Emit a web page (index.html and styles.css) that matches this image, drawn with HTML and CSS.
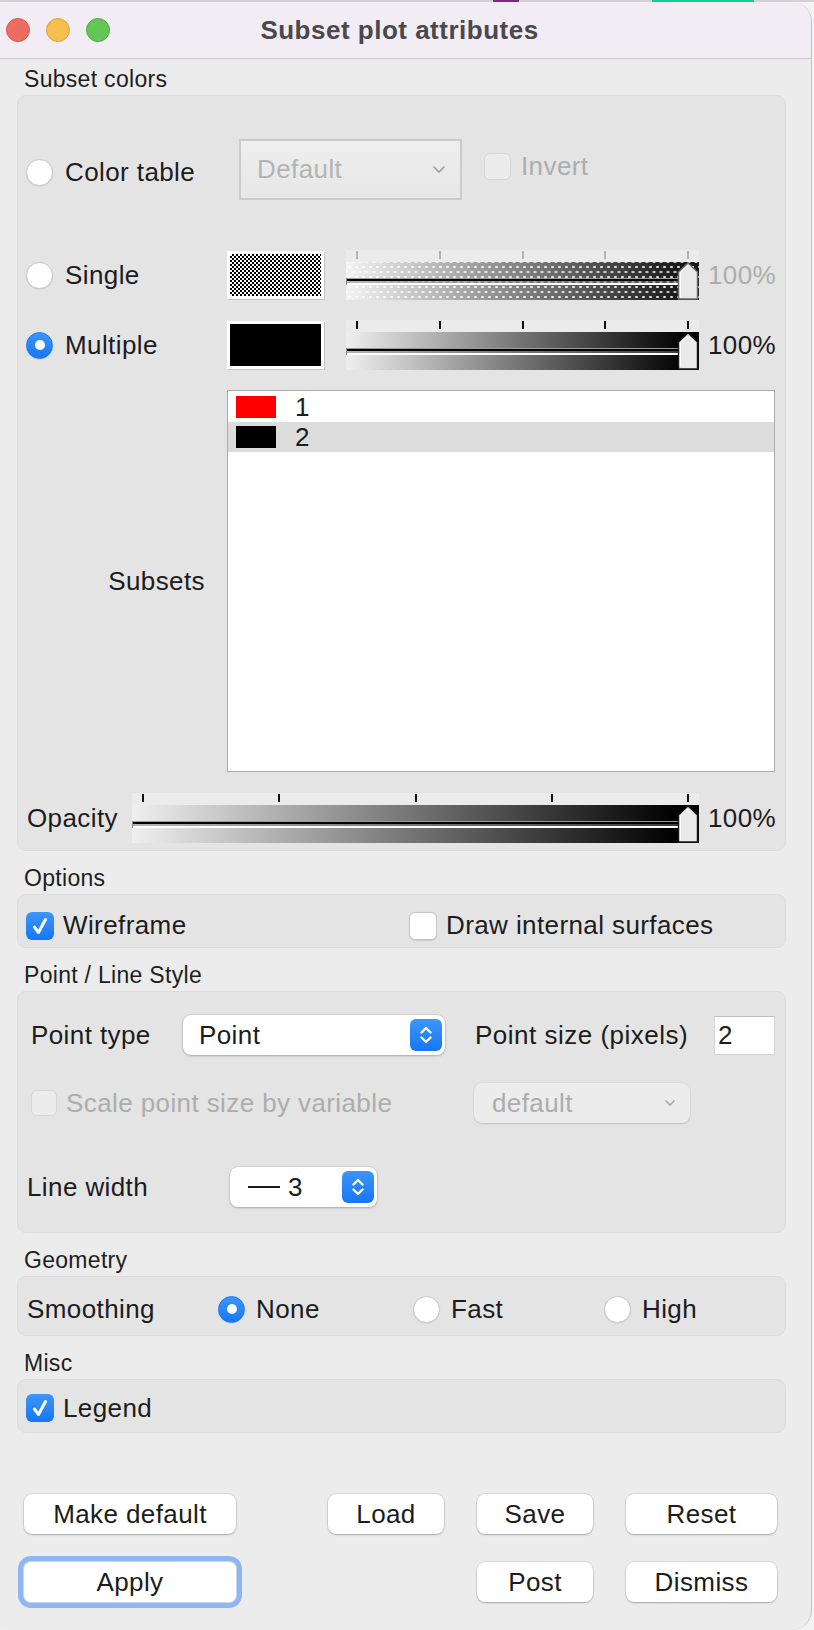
FILE: index.html
```html
<!DOCTYPE html>
<html>
<head>
<meta charset="utf-8">
<title>Subset plot attributes</title>
<link rel="stylesheet" href="styles.css">
</head>
<body>
<div class="topstrip"><span class="ts-a"></span><span class="ts-purple"></span><span class="ts-b"></span><span class="ts-green"></span></div>
<div class="window">
  <div class="titlebar">
    <div class="lights"><span class="light red"></span><span class="light yellow"></span><span class="light green"></span></div>
    <div class="title">Subset plot attributes</div>
    <div></div>
  </div>
  <div class="content">
    <section class="section">
      <div class="glabel">Subset colors</div>
      <div class="group g-colors">
        <div class="row row-ct">
          <div class="lead lead-ct"><span class="radio"></span><span>Color table</span></div>
          <div class="combo-dis"><span>Default</span><svg width="14" height="9" viewBox="0 0 14 9"><polyline points="1.5,1.5 7,7 12.5,1.5" fill="none" stroke="#a0a0a0" stroke-width="1.6"/></svg></div>
          <div class="checkitem invert"><span class="cb dis"></span><span class="distext">Invert</span></div>
        </div>
        <div class="row row-sl row-single">
          <div class="lead lead-sw"><span class="radio"></span><span>Single</span></div>
          <div class="swatch pattern"></div>
          <div class="slider dis">
            <div class="ticks"><i></i><i></i><i></i><i></i><i></i></div>
            <div class="track">
              <div class="groove"></div>
              <svg class="handle" width="22" height="38" viewBox="0 0 22 38"><path d="M1.5 37 V10 L11 1 L20.5 10 V37 Z" fill="#e9e9e9" stroke="#6a6a6a" stroke-width="1.5"/><path d="M3.3 35 V10.8 L11 3.6" fill="none" stroke="#fff" stroke-width="1"/></svg>
            </div>
          </div>
          <span class="pct distext">100%</span>
        </div>
        <div class="row row-sl row-multi">
          <div class="lead lead-sw"><span class="radio on"></span><span>Multiple</span></div>
          <div class="swatch black"></div>
          <div class="slider">
            <div class="ticks"><i></i><i></i><i></i><i></i><i></i></div>
            <div class="track">
              <div class="groove"></div>
              <svg class="handle" width="22" height="38" viewBox="0 0 22 38"><path d="M1.5 37 V10 L11 1 L20.5 10 V37 Z" fill="#e9e9e9" stroke="#1a1a1a" stroke-width="1.5"/><path d="M3.3 35 V10.8 L11 3.6" fill="none" stroke="#fff" stroke-width="1"/></svg>
            </div>
          </div>
          <span class="pct">100%</span>
        </div>
        <div class="row row-list">
          <div class="lead-list">Subsets</div>
          <div class="list">
            <div class="item"><span class="chip red-chip"></span><span>1</span></div>
            <div class="item sel"><span class="chip black-chip"></span><span>2</span></div>
          </div>
        </div>
        <div class="row row-op">
          <div class="lead-op">Opacity</div>
          <div class="slider wide">
            <div class="ticks"><i></i><i></i><i></i><i></i><i></i></div>
            <div class="track">
              <div class="groove"></div>
              <svg class="handle" width="22" height="38" viewBox="0 0 22 38"><path d="M1.5 37 V10 L11 1 L20.5 10 V37 Z" fill="#e9e9e9" stroke="#1a1a1a" stroke-width="1.5"/><path d="M3.3 35 V10.8 L11 3.6" fill="none" stroke="#fff" stroke-width="1"/></svg>
            </div>
          </div>
          <span class="pct">100%</span>
        </div>
      </div>
    </section>

    <section class="section">
      <div class="glabel">Options</div>
      <div class="group g-options">
        <div class="checkitem"><span class="cb on"><svg width="18" height="20" viewBox="0 0 18 20"><polyline points="3.5,11 7.5,16.5 14.5,3.5" fill="none" stroke="#fff" stroke-width="3" stroke-linecap="round" stroke-linejoin="round"/></svg></span><span>Wireframe</span></div>
        <div class="checkitem"><span class="cb off"></span><span>Draw internal surfaces</span></div>
      </div>
    </section>

    <section class="section">
      <div class="glabel">Point / Line Style</div>
      <div class="group g-point">
        <div class="row prow">
          <div class="lead-pt">Point type</div>
          <div class="combo combo-pt"><span>Point</span><span class="stepper"><svg width="16" height="24" viewBox="0 0 16 24"><polyline points="3.5,9.5 8,5 12.5,9.5" fill="none" stroke="#fff" stroke-width="2.4" stroke-linecap="round" stroke-linejoin="round"/><polyline points="3.5,14.5 8,19 12.5,14.5" fill="none" stroke="#fff" stroke-width="2.4" stroke-linecap="round" stroke-linejoin="round"/></svg></span></div>
          <div class="psize">Point size (pixels)</div>
          <div class="input">2</div>
        </div>
        <div class="row prow prow2">
          <div class="checkitem lead-scale"><span class="cb dis"></span><span class="distext">Scale point size by variable</span></div>
          <div class="combo combo-dis2"><span>default</span><svg width="12" height="8" viewBox="0 0 12 8"><polyline points="1.5,1.5 6,6 10.5,1.5" fill="none" stroke="#a8a8a8" stroke-width="1.6"/></svg></div>
        </div>
        <div class="row prow prow3">
          <div class="lead-lw">Line width</div>
          <div class="combo combo-lw"><span class="lwval"><span class="lwline"></span><span>3</span></span><span class="stepper"><svg width="16" height="24" viewBox="0 0 16 24"><polyline points="3.5,9.5 8,5 12.5,9.5" fill="none" stroke="#fff" stroke-width="2.4" stroke-linecap="round" stroke-linejoin="round"/><polyline points="3.5,14.5 8,19 12.5,14.5" fill="none" stroke="#fff" stroke-width="2.4" stroke-linecap="round" stroke-linejoin="round"/></svg></span></div>
        </div>
      </div>
    </section>

    <section class="section">
      <div class="glabel">Geometry</div>
      <div class="group g-geom">
        <div class="lead-sm">Smoothing</div>
        <div class="ritem r-none"><span class="radio on"></span><span>None</span></div>
        <div class="ritem r-fast"><span class="radio"></span><span>Fast</span></div>
        <div class="ritem"><span class="radio"></span><span>High</span></div>
      </div>
    </section>

    <section class="section">
      <div class="glabel">Misc</div>
      <div class="group g-misc">
        <div class="checkitem"><span class="cb on"><svg width="18" height="20" viewBox="0 0 18 20"><polyline points="3.5,11 7.5,16.5 14.5,3.5" fill="none" stroke="#fff" stroke-width="3" stroke-linecap="round" stroke-linejoin="round"/></svg></span><span>Legend</span></div>
      </div>
    </section>

    <div class="buttons">
      <div class="btn b-wide">Make default</div>
      <div class="btn">Load</div>
      <div class="btn">Save</div>
      <div class="btn">Reset</div>
      <div class="btn b-wide focus">Apply</div>
      <div class="btn b-post">Post</div>
      <div class="btn">Dismiss</div>
    </div>
  </div>
</div>
</body>
</html>
```

FILE: styles.css
```css
html, body {
  margin: 0;
  padding: 0;
}
body {
  background: #f3f3f3;
  font-family: "Liberation Sans", Arial, sans-serif;
  font-size: 26px;
  letter-spacing: 0.4px;
  color: #1c1c1c;
  overflow: hidden;
}

.topstrip {
  height: 2px;
  display: flex;
  background: #d2d2d2;
}
.ts-a { width: 493px; }
.ts-purple { width: 26px; background: #7d2a80; }
.ts-b { width: 133px; }
.ts-green { width: 102px; background: #14d08c; }

.window {
  margin-left: -12px;
  width: 824px;
  height: 1628px;
  box-sizing: border-box;
  background: #ececec;
  border-radius: 20px;
  border-right: 1px solid #c2c2c2;
  overflow: hidden;
}

.titlebar {
  height: 56px;
  background: #f2edf4;
  border-bottom: 1px solid #cbc7cd;
  display: grid;
  grid-template-columns: 1fr auto 1fr;
  align-items: center;
}
.lights {
  display: flex;
  gap: 16px;
  padding-left: 18px;
}
.light {
  width: 24px;
  height: 24px;
  border-radius: 50%;
  box-sizing: border-box;
}
.red { background: #ee6b60; border: 1px solid #d8594e; }
.yellow { background: #f6be4f; border: 1px solid #dba53e; }
.green { background: #62c655; border: 1px solid #50ab44; }
.title {
  font-weight: bold;
  font-size: 26px;
  color: #4b484d;
  letter-spacing: 0.5px;
}

.content {
  padding: 5px 0 0 29px;
}
.section {
  width: 769px;
}
.section + .section {
  margin-top: 12px;
}
.glabel {
  height: 31px;
  line-height: 31px;
  font-size: 23px;
  letter-spacing: 0.3px;
  padding-left: 7px;
  color: #1e1e1e;
}
.group {
  background: #e4e4e4;
  border: 1px solid #dcdcdc;
  border-radius: 9px;
  padding-left: 8px;
  padding-right: 10px;
}

.row {
  display: flex;
  align-items: center;
}
.lead {
  display: flex;
  align-items: center;
  gap: 12px;
  flex: none;
}

/* radio buttons */
.radio {
  width: 27px;
  height: 27px;
  border-radius: 50%;
  background: #fff;
  box-sizing: border-box;
  border: 1px solid #c9c9c9;
  box-shadow: 0 0.5px 1px rgba(0, 0, 0, 0.12);
  flex: none;
  display: flex;
  align-items: center;
  justify-content: center;
}
.radio.on {
  background: linear-gradient(#3d95fb, #1677f5);
  border-color: #1a78f0;
}
.radio.on::after {
  content: "";
  width: 10px;
  height: 10px;
  border-radius: 50%;
  background: #fff;
}

/* checkboxes */
.checkitem {
  display: flex;
  align-items: center;
  gap: 9px;
}
.cb {
  width: 28px;
  height: 28px;
  border-radius: 6px;
  box-sizing: border-box;
  flex: none;
  display: flex;
  align-items: center;
  justify-content: center;
}
.cb.on {
  background: linear-gradient(#3d95fb, #1677f5);
}
.cb.off {
  background: #fff;
  border: 1px solid #c6c6c6;
  box-shadow: 0 0.5px 1px rgba(0, 0, 0, 0.12);
}
.cb.dis {
  width: 27px;
  height: 27px;
  background: #ececec;
  border: 1px solid #d6d6d6;
}
.distext {
  color: #adadad;
}

/* Subset colors group */
.g-colors {
  padding-top: 43px;
  padding-bottom: 7px;
}
.row-ct {
  height: 61px;
}
.lead-ct {
  width: 213px;
  margin-top: 5px;
}
.combo-dis {
  width: 223px;
  height: 61px;
  box-sizing: border-box;
  border: 2px solid #cbcbcb;
  background: linear-gradient(#eeeeee, #e7e7e7);
  display: flex;
  align-items: center;
  justify-content: space-between;
  padding: 0 14px 0 16px;
  color: #b4b4b4;
}
.invert {
  margin-left: 22px;
  gap: 10px;
  margin-top: -7px;
}

.row-sl {
  height: 50px;
}
.row-single {
  margin-top: 50px;
}
.row-multi {
  margin-top: 20px;
}
.lead-sw {
  width: 201px;
}
.swatch {
  width: 97px;
  height: 48px;
  box-sizing: border-box;
  border: 3px solid #fff;
  box-shadow: 1px 1px 0 #c4c4c4;
  flex: none;
}
.swatch.pattern {
  background: repeating-conic-gradient(#000 0 25%, #fff 0 50%) 0 0 / 4px 4px;
}
.swatch.black {
  background: #000;
}

.slider {
  width: 353px;
  height: 50px;
  margin-left: 22px;
  display: flex;
  flex-direction: column;
  flex: none;
}
.slider.wide {
  width: 567px;
  margin-left: 0;
}
.ticks {
  height: 12px;
  background: #ebebeb;
  display: flex;
  justify-content: space-between;
  padding: 0 10px;
  box-sizing: border-box;
}
.ticks i {
  width: 2px;
  height: 8px;
  margin-top: 1px;
  background: #111;
}
.slider.dis .ticks i {
  background: #b4b4b4;
}
.track {
  flex: 1;
  position: relative;
  display: flex;
  flex-direction: column;
  justify-content: center;
  background: linear-gradient(to right, #efefef, #000 96%);
}
.slider.dis .track {
  background-image:
    radial-gradient(circle, rgba(255, 255, 255, 0.85) 0 1px, transparent 1.5px),
    radial-gradient(circle, rgba(255, 255, 255, 0.85) 0 1px, transparent 1.5px),
    linear-gradient(to right, #f4f4f4, #151515 96%);
  background-size: 7px 10px, 7px 10px, auto;
  background-position: 0 0, 3.5px 5px, 0 0;
}
.groove {
  height: 7px;
  margin-right: 20px;
  box-sizing: border-box;
  border-left: 1px solid #888;
  background: linear-gradient(to bottom, #9a9a9a 0 1px, #000 1px 3px, rgba(120,120,120,0.5) 3px 5px, #fff 5px 7px);
}
.handle {
  position: absolute;
  right: 0;
  top: 0;
}
.pct {
  margin-left: 9px;
}

.row-list {
  margin-top: 20px;
  height: 382px;
}
.lead-list {
  width: 201px;
  padding-right: 22px;
  box-sizing: border-box;
  text-align: right;
  flex: none;
}
.list {
  width: 548px;
  height: 382px;
  box-sizing: border-box;
  background: #fff;
  border: 1px solid #a9a9a9;
  padding-top: 1px;
}
.item {
  height: 30px;
  display: flex;
  align-items: center;
  padding-left: 8px;
}
.item.sel {
  background: #dcdcdc;
}
.chip {
  width: 40px;
  height: 22px;
  margin-right: 19px;
}
.red-chip { background: #ff0000; }
.black-chip { background: #000; }

.row-op {
  margin-top: 21px;
  height: 50px;
}
.lead-op {
  width: 106px;
  padding-left: 1px;
  box-sizing: border-box;
  flex: none;
}

/* Options */
.g-options {
  display: grid;
  grid-template-columns: 383px 1fr;
  padding-top: 15px;
  padding-bottom: 9px;
  height: 28px;
}

/* Point / Line style */
.g-point {
  padding-top: 23px;
  padding-bottom: 25px;
}
.prow {
  height: 40px;
}
.prow2 {
  margin-top: 28px;
}
.prow3 {
  margin-top: 44px;
}
.lead-pt {
  width: 157px;
  padding-left: 5px;
  box-sizing: border-box;
  flex: none;
}
.combo {
  height: 40px;
  background: #fff;
  border-radius: 8px;
  box-shadow: 0 0 0 0.5px rgba(0, 0, 0, 0.12), 0 1px 2.5px rgba(0, 0, 0, 0.22);
  display: flex;
  align-items: center;
  justify-content: space-between;
  box-sizing: border-box;
  flex: none;
}
.combo-pt {
  width: 262px;
  padding: 0 3px 0 16px;
}
.stepper {
  width: 32px;
  height: 32px;
  border-radius: 6px;
  background: linear-gradient(#3d95fb, #1677f5);
  display: flex;
  align-items: center;
  justify-content: center;
}
.psize {
  margin-left: 30px;
  width: 239px;
  flex: none;
  letter-spacing: 0.5px;
}
.input {
  width: 61px;
  height: 39px;
  box-sizing: border-box;
  background: #fff;
  border: 1px solid #d4d4d4;
  border-top-color: #bdbdbd;
  padding-left: 3px;
  display: flex;
  align-items: center;
}
.lead-scale {
  width: 448px;
  padding-left: 5px;
  box-sizing: border-box;
  flex: none;
}
.lead-scale .cb {
  width: 26px;
  height: 26px;
}
.combo-dis2 {
  width: 216px;
  background: #ececec;
  box-shadow: 0 0 0 0.5px rgba(0, 0, 0, 0.07), 0 1px 1.5px rgba(0, 0, 0, 0.12);
  color: #adadad;
  padding: 0 14px 0 18px;
}
.lead-lw {
  width: 204px;
  padding-left: 1px;
  box-sizing: border-box;
  flex: none;
}
.combo-lw {
  width: 147px;
  padding: 0 3px 0 18px;
}
.lwval {
  display: flex;
  align-items: center;
  gap: 8px;
}
.lwline {
  width: 32px;
  height: 2px;
  background: #1c1c1c;
}

/* Geometry */
.g-geom {
  display: flex;
  align-items: center;
  height: 28px;
  padding-top: 18px;
  padding-bottom: 12px;
}
.lead-sm {
  width: 192px;
  padding-left: 1px;
  box-sizing: border-box;
  flex: none;
}
.ritem {
  display: flex;
  align-items: center;
  gap: 11px;
  flex: none;
}
.r-none { width: 195px; }
.r-fast { width: 191px; }

/* Misc */
.g-misc {
  height: 28px;
  padding-top: 14px;
  padding-bottom: 10px;
  display: flex;
  align-items: center;
}

/* Buttons */
.buttons {
  margin-top: 61px;
  padding-left: 7px;
  display: grid;
  grid-template-columns: 271px 116px 116px 151px;
  column-gap: 33px;
  row-gap: 28px;
}
.btn {
  height: 40px;
  background: #fff;
  border-radius: 8px;
  box-shadow: 0 0 0 0.5px rgba(0, 0, 0, 0.14), 0 1px 2px rgba(0, 0, 0, 0.24);
  display: flex;
  align-items: center;
  justify-content: center;
  color: #1c1c1c;
}
.b-wide {
  width: 212px;
}
.focus {
  box-shadow: 0 0 0 1px #c8d8ee, 0 0 0 6px #90b6ef;
  border-radius: 7px;
}
.b-post {
  grid-column: 3;
}
```
